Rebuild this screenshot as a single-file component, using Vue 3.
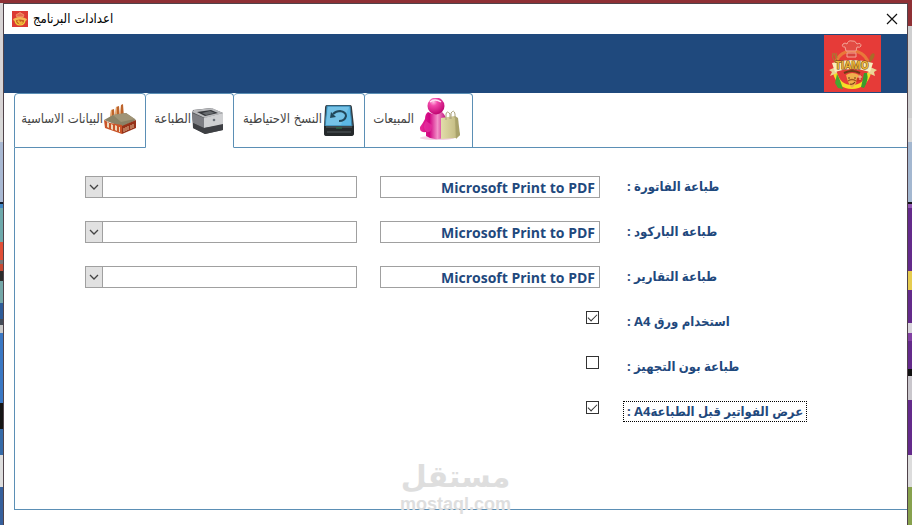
<script setup>
import { ref } from 'vue'

const tabs = [
  { id: 'basic', label: 'البيانات الاساسية' },
  { id: 'print', label: 'الطباعة' },
  { id: 'backup', label: 'النسخ الاحتياطية' },
  { id: 'sales', label: 'المبيعات' },
]
const active = ref('print')

const printers = ref([
  { id: 'invoice', label: 'طباعة الفاتورة :', value: 'Microsoft Print to PDF' },
  { id: 'barcode', label: 'طباعة الباركود :', value: 'Microsoft Print to PDF' },
  { id: 'reports', label: 'طباعة التقارير :', value: 'Microsoft Print to PDF' },
])
const options = ref([
  { id: 'a4', label: 'استخدام ورق A4 :', checked: true, focused: false },
  { id: 'prep', label: 'طباعة بون التجهيز :', checked: false, focused: false },
  { id: 'preview', label: 'عرض الفواتير قبل الطباعةA4 :', checked: true, focused: true },
])
</script>

<template>
  <div class="desktop">
    <div class="edge edge-left"></div>
    <main class="window">
      <header class="titlebar">
        <svg class="app-icon" viewBox="0 0 16 16" aria-hidden="true">
          <rect width="16" height="16" fill="#dc3a34" />
          <path d="M5 6Q3 3 6 3Q8 0 10 3Q13 3 11 6Z" fill="#e8694f" stroke="#f6b27a" stroke-width=".7" />
          <path d="M3 8Q3 14 8 14Q13 14 13 8" fill="#c65f20" stroke="#efd23d" stroke-width="1.2" />
          <path d="M1 8Q8 4 15 8L14 10Q8 7 2 10Z" fill="#f4b757" />
          <path d="M5 10l2-1 1 2 2-1 1 2-3 2z" fill="#f2b33a" />
        </svg>
        <h1 class="title" dir="rtl">اعدادات البرنامج</h1>
        <button class="close" type="button" aria-label="إغلاق">
          <svg viewBox="0 0 12 12" width="12" height="12"><path d="M1 1L11 11M11 1L1 11" stroke="#111" stroke-width="1.2" /></svg>
        </button>
      </header>

      <div class="banner">
        <svg class="logo" viewBox="0 0 57 57" role="img" aria-label="TIAMO">
          <rect width="57" height="57" fill="#e63b38" />
          <path d="M12 27A17 17 0 0 1 44 27" fill="none" stroke="#e9783a" stroke-width="3" />
          <path d="M11 38Q15 52 28 52Q41 52 45 38" fill="none" stroke="#f5df26" stroke-width="4" />
          <path d="M22 16L21 12Q17 12 19 9Q21 7 23 9Q24 5 28 6Q31 5 33 9Q37 7 37 11Q36 13 33 12L32 16Z" fill="#e24c44" stroke="#f3a597" stroke-width="1" />
          <path d="M23 18H32V22H23Z" fill="#d7443d" stroke="#f3a597" stroke-width="1" />
          <path d="M9 18Q7 22 11 27M10 18L13 26M12 18L13 23" fill="none" stroke="#a08131" stroke-width="1" />
          <ellipse cx="48" cy="22" rx="2" ry="4" transform="rotate(25 48 22)" fill="#a86b28" />
          <path d="M47 25L44 30" stroke="#a86b28" stroke-width="1.5" />
          <path d="M13 39Q16 44 19 54L14 53L11 48Z" fill="#46a62f" />
          <path d="M43 38Q45 45 40 53L37 52Q39 44 40 38Z" fill="#3a9c2b" />
          <path d="M22 40Q28 36 35 40L33 46Q31 51 28 53Q24 49 22 40Z" fill="#f0b04c" />
          <path d="M20 38Q28 34 36 38" fill="none" stroke="#713b16" stroke-width="2" />
          <path d="M24 43H26M30 43H32M26 49Q29 50 31 47" fill="none" stroke="#713b16" stroke-width="1.2" />
          <path d="M24 46Q28 43 32 46" fill="none" stroke="#a4561f" stroke-width="1.5" />
          <path d="M33 43L38 40L37 46L32 47Z" fill="#cd3525" />
          <path d="M36 40V45M34 42H38" stroke="#f4d4a0" stroke-width="1" />
          <path d="M5 35L12 32L13 38L6 41L8 37ZM53 35L46 32L44 38L51 41L50 37Z" fill="#ead596" />
          <path d="M8 28Q28 22 49 28L46 37Q28 31 11 37Z" fill="#f9edbd" />
          <text x="28" y="34" text-anchor="middle" class="logo-text">TIAMO</text>
        </svg>
      </div>

      <nav class="tabs" role="tablist">
        <button
          v-for="tab in tabs"
          :key="tab.id"
          type="button"
          role="tab"
          class="tab"
          :class="[tab.id, { active: active === tab.id }]"
          :aria-selected="active === tab.id"
          @click="active = tab.id"
        >
          <span class="tab-label" dir="rtl">{{ tab.label }}</span>
          <svg v-if="tab.id === 'basic'" class="icon" viewBox="0 0 32 32">
            <path d="M7 6L10 5L11 17H6ZM12 3L15 2L16 15H11ZM17 1L19 0L20 14H16Z" fill="#bd642c" />
            <path d="M7 6L8 6V16H6ZM12 3L13 3V14H11ZM17 1V13H16Z" fill="#e3a268" />
            <path d="M0 16L9 11L22 9L32 16L18 23Z" fill="#8b8266" />
            <path d="M9 11L22 9L31 15L17 18Z" fill="#a09477" />
            <path d="M0 16L6 19L18 21V30L1 24Z" fill="#c95428" />
            <path d="M18 22L32 16V24L18 30Z" fill="#963219" />
            <path d="M3 18L5 19V24L3 23ZM7 20L9 21V26L7 25ZM11 21L13 22V27L11 26ZM15 23L16 23V28L15 28Z" fill="#eed7ba" />
            <path d="M20 24V28M22 23V27M24 22V26M27 21V25M29 20V24" stroke="#dfb995" stroke-width="1" />
          </svg>
          <svg v-else-if="tab.id === 'print'" class="icon" viewBox="0 0 32 32">
            <path d="M0 9L1 6L19 4L31 9V26L13 30L1 24Z" fill="#55575a" />
            <path d="M0 8L2 6L20 4L31 9L13 14Z" fill="#b9babd" />
            <path d="M5 8L19 6L26 9L13 12Z" fill="#34363a" />
            <path d="M10 9L18 7L23 9L14 11Z" fill="#696c70" />
            <path d="M0 9L12 14V24L1 19Z" fill="#7d7e83" />
            <path d="M12 14L31 9V21L12 24Z" fill="#cfd0d2" />
            <path d="M1 19L12 24L31 20V26L13 30L1 24Z" fill="#3e4044" />
            <circle cx="22" cy="16" r="1.3" fill="#6b7179" />
          </svg>
          <svg v-else-if="tab.id === 'backup'" class="icon" viewBox="0 0 32 32">
            <path d="M4 1H27Q29 1 29 4L31 22V29Q31 32 28 32H3Q1 32 1 29V22L2 4Q2 1 4 1Z" fill="#343a3e" />
            <path d="M4 2H27L29 22H2Z" fill="#5cb8e4" stroke="#387fa5" stroke-width="1" />
            <path d="M5 3H26L18 21H3Z" fill="#82c8e7" opacity=".65" />
            <path d="M1 22H31V29Q31 32 28 32H4Q1 32 1 29Z" fill="#25292b" />
            <path d="M3 23H29" stroke="#59666b" />
            <path d="M10 10Q13 7 17 7Q23 8 23 12Q22 17 16 17" fill="none" stroke="#22485b" stroke-width="2" />
            <path d="M7 14L8 8L13 13Z" fill="#22485b" />
            <path d="M13 24H19" stroke="#2a7a4c" stroke-width="1" />
            <path d="M4 28H28" stroke="#555c60" stroke-width="1" />
          </svg>
          <svg v-else class="icon sales-icon" viewBox="0 0 44 44">
            <defs>
              <radialGradient id="pinkHead" cx=".35" cy=".25" r=".8"><stop stop-color="#ffc1e4" /><stop offset=".3" stop-color="#f248aa" /><stop offset="1" stop-color="#bc006e" /></radialGradient>
              <linearGradient id="pinkBody"><stop stop-color="#e82d98" /><stop offset=".35" stop-color="#d00281" /><stop offset=".65" stop-color="#f391c9" /><stop offset="1" stop-color="#b90072" /></linearGradient>
              <linearGradient id="bag"><stop stop-color="#e1dda9" /><stop offset=".7" stop-color="#c9c189" /><stop offset="1" stop-color="#a8a16b" /></linearGradient>
            </defs>
            <ellipse cx="18" cy="40" rx="17" ry="2" fill="#e9b1d2" opacity=".6" />
            <path d="M9 14Q16 18 23 14Q28 18 28 27L26 39Q16 44 7 38L7 34Q0 35 1 29Q4 25 6 21Q6 16 9 14Z" fill="url(#pinkBody)" />
            <circle cx="17" cy="8" r="8.5" fill="url(#pinkHead)" />
            <path d="M11 4Q16 0 22 4" fill="none" stroke="#ffe1f1" stroke-width="1.5" />
            <path d="M7 23Q2 30 8 34Q13 35 13 27" fill="#e533a1" opacity=".7" />
            <path d="M22 20L36 18L41 37L37 40L22 41Z" fill="url(#bag)" />
            <path d="M36 18L39 20L41 37L37 41Z" fill="#a9a26a" />
            <path d="M27 22V16Q28 12 31 16V21M32 21V15Q35 11 36 16V20" fill="none" stroke="#aaa07a" stroke-width="1" />
          </svg>
        </button>
        <span class="tabs-rest"></span>
      </nav>

      <section class="panel">
        <div v-for="row in printers" :key="row.id" class="row">
          <div class="combo">
            <select :aria-label="row.label" dir="rtl"><option></option></select>
            <span class="combo-button">
              <svg viewBox="0 0 10 6" width="10" height="6"><path d="M1 1L5 5L9 1" fill="none" stroke="#444" stroke-width="1.3" /></svg>
            </span>
          </div>
          <input :id="row.id" v-model="row.value" class="field" type="text" />
          <label :for="row.id" class="label" dir="rtl">{{ row.label }}</label>
        </div>
        <div v-for="row in options" :key="row.id" class="row">
          <input :id="row.id" v-model="row.checked" class="check" type="checkbox" />
          <label :for="row.id" class="label" :class="{ focused: row.focused }" dir="rtl">{{ row.label }}</label>
        </div>
      </section>

      <div class="watermark">
        <span class="mark-ar" dir="rtl">مستقل</span>
        <span class="mark-en">mostaql.com</span>
      </div>
    </main>
    <div class="edge edge-right"></div>
  </div>
</template>

<style>
body {
  background: #fff;
}
</style>

<style scoped>
.desktop {
  display: grid;
  grid-template-columns: 3px 1fr 4px;
  box-sizing: border-box;
  min-height: 100vh;
  padding-top: 3px;
  background: #8f3035;
  font-family: "Open Sans", "DejaVu Sans", sans-serif;
}
.edge-left {
  background: linear-gradient(
    #d8d4d5 0 115px, #d8d8d8 115px 139px, #a9b9d3 139px 199px, #111a2b 199px 201px,
    #3f86c4 201px 205px, #6fa9ab 205px 239px, #e14f37 239px 257px, #777 257px 261px,
    #c84a34 261px 268px, #2c2c2c 268px 278px, #74a7a8 278px 300px, #2e5c99 300px 316px,
    #444c58 316px 322px, #c9c9c9 322px 330px, #3a78c4 330px 400px, #151515 400px 426px,
    #366ba8 426px 452px, #dedede 452px 484px, #36609c 484px
  );
}
.edge-right {
  background: linear-gradient(
    #8f3035 0 23px, #cfcfd0 23px 115px, #d8d8d8 115px 139px, #a3b7d0 139px 199px,
    #15111b 199px 201px, #9157b3 201px 205px, #642a8b 205px 268px, #e6cc50 268px 287px,
    #642a8b 287px 320px, #d8d4dc 320px 330px, #8240a3 330px 338px, #642a8b 338px 366px,
    #111 366px 373px, #c9c6cc 373px 397px, #642a8b 397px 452px, #dcdcdc 452px 484px,
    #87a14d 484px
  );
}
.window {
  position: relative;
  display: flex;
  flex-direction: column;
  background: #fff;
  border: 1px solid #50434a;
  border-bottom: 0;
}
.titlebar {
  display: flex;
  align-items: center;
  height: 30px;
  padding: 0 9px 0 8px;
  gap: 5px;
}
.app-icon {
  width: 16px;
  height: 16px;
}
.title {
  margin: 0;
  color: #000;
  font: 400 13px/16px "DejaVu Sans Condensed", "DejaVu Sans", sans-serif;
}
.close {
  display: flex;
  margin-left: auto;
  padding: 0;
  background: none;
  border: 0;
}
.banner {
  display: flex;
  justify-content: flex-end;
  align-items: center;
  height: 59px;
  padding-right: 26px;
  background: #1f497d;
}
.logo {
  width: 57px;
  height: 57px;
}
.logo-text {
  fill: #e9b437;
  stroke: #704313;
  stroke-width: 1px;
  paint-order: stroke;
  font: 700 10px "Open Sans", sans-serif;
}
.tabs {
  display: flex;
  height: 55px;
  padding-left: 10px;
}
.tab {
  display: flex;
  align-items: center;
  justify-content: flex-end;
  box-sizing: border-box;
  gap: 1px;
  padding: 0 9px 1px 4px;
  background: #fff;
  border: 1px solid #5b8fb5;
  border-left-width: 0;
  border-radius: 4px 4px 0 0;
  color: #444;
}
.tab:first-child {
  border-left-width: 1px;
}
.tab.active {
  border-bottom-color: #fff;
}
.tab.basic {
  width: 132px;
}
.tab.print {
  width: 88px;
}
.tab.backup {
  width: 131px;
}
.tab.sales {
  width: 108px;
  gap: 5px;
}
.tab-label {
  padding-bottom: 2px;
  font: 400 13px/16px "DejaVu Sans Condensed", "DejaVu Sans", sans-serif;
  white-space: nowrap;
}
.icon {
  flex: none;
  width: 32px;
  height: 32px;
}
.sales-icon {
  width: 44px;
  height: 44px;
}
.tabs-rest {
  flex: 1;
  border-bottom: 1px solid #5b8fb5;
}
.panel {
  box-sizing: border-box;
  margin: 0 0 15px 10px;
  padding: 28px 0 63px 70px;
  border: 1px solid #5b8fb5;
  border-width: 0 0 1px 1px;
}
.row {
  display: grid;
  grid-template-columns: 272fr 220fr 284fr;
  column-gap: 23px;
  align-items: start;
  height: 45px;
}
.combo {
  position: relative;
  height: 22px;
}
.combo select {
  display: block;
  width: 100%;
  height: 22px;
  appearance: none;
  background: #fff;
  border: 1px solid #a0a0a0;
  border-radius: 0;
}
.combo-button {
  position: absolute;
  top: 0;
  left: 0;
  display: grid;
  place-items: center;
  box-sizing: border-box;
  width: 18px;
  height: 22px;
  background: #e1e1e1;
  border: 1px solid #a0a0a0;
  pointer-events: none;
}
.field {
  box-sizing: border-box;
  width: 100%;
  height: 22px;
  padding: 1px 4px 0 3px;
  background: #fff;
  border: 1px solid #a0a0a0;
  color: #1f497d;
  font: 700 14px/20px "Open Sans", sans-serif;
  text-align: right;
}
.label {
  grid-column: 3;
  justify-self: start;
  padding: 0 3px;
  border: 1px solid transparent;
  color: #1f497d;
  font: 700 13px/19px "Open Sans", "DejaVu Sans Condensed", "DejaVu Sans", sans-serif;
  white-space: nowrap;
}
.focused {
  border: 1px dotted #000;
}
.check {
  grid-column: 2;
  justify-self: end;
  display: grid;
  place-items: center;
  width: 13px;
  height: 13px;
  margin: 0 1px 0 0;
  appearance: none;
  background: #fff;
  border: 1px solid #333;
}
.check:checked::before {
  content: "";
  width: 8px;
  height: 4px;
  border: solid #333;
  border-width: 0 0 1px 1px;
  transform: translateY(-1px) rotate(-45deg);
}
.watermark {
  position: absolute;
  left: 50%;
  bottom: 11px;
  display: flex;
  flex-direction: column;
  align-items: center;
  transform: translateX(-50%);
  color: #dedede;
  pointer-events: none;
}
.mark-ar {
  font: 700 30px/34px "DejaVu Sans", sans-serif;
}
.mark-en {
  font: 700 18px/20px "Liberation Sans", sans-serif;
}
</style>
